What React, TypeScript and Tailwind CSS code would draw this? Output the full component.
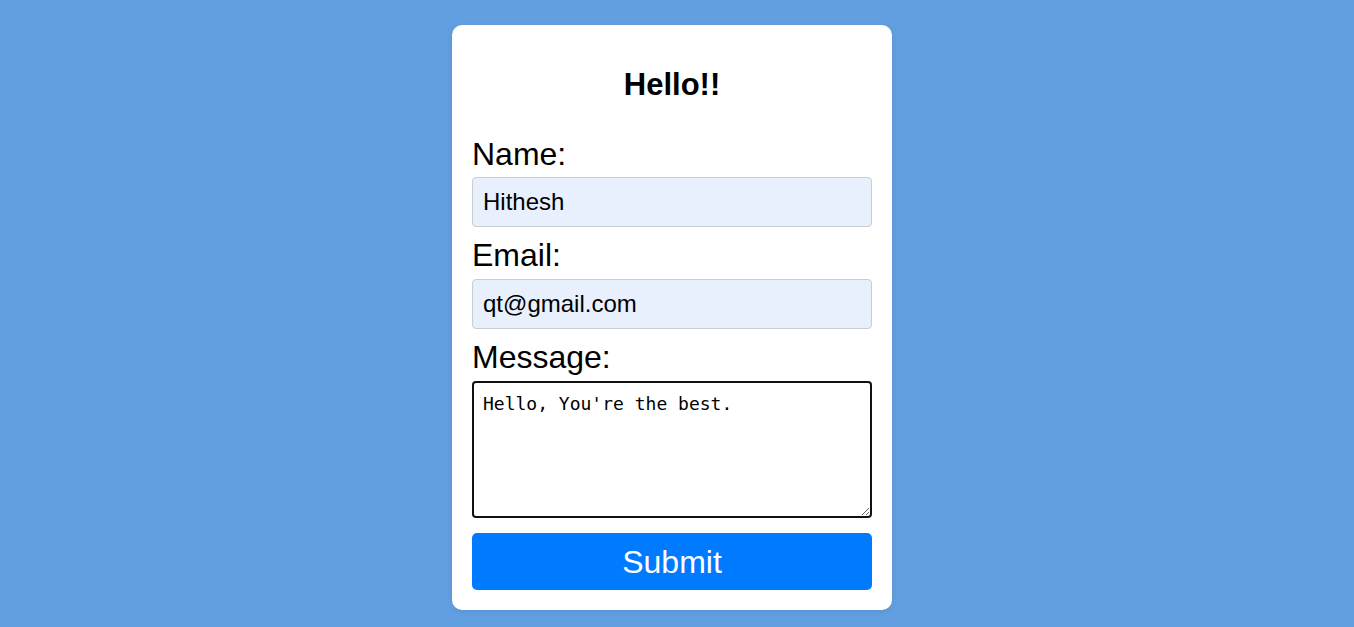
import React, { useState } from 'react';

export default function App() {
  const [name, setName] = useState('Hithesh');
  const [email, setEmail] = useState('qt@gmail.com');
  const [message, setMessage] = useState("Hello, You're the best.");

  return (
    <div className="min-h-screen bg-[#629fe0] flex justify-center pr-[10px]" style={{ fontFamily: '"Liberation Sans", Arial, sans-serif' }}>
      {/* Contact card */}
      <form
        className="mt-[25px] mb-[17px] w-[440px] h-fit bg-white rounded-[10px] p-[20px] flex flex-col shadow-[0_2px_6px_rgba(0,0,0,0.08)]"
        onSubmit={(e) => e.preventDefault()}
      >
        <h1 className="text-[31px] leading-[37px] font-bold text-black text-center mt-[21px] mb-[23px]">Hello!!</h1>

        <label className="text-[32px] leading-[34px] text-black mt-[11px] mb-[6px]">Name:</label>
        <input
          value={name}
          onChange={(e) => setName(e.target.value)}
          className="h-[50px] px-[10px] text-[24px] text-black bg-[#e8f0fe] border border-[#c9ccd1] rounded-[4px] outline-none"
        />

        <label className="text-[32px] leading-[34px] text-black mt-[11px] mb-[7px]">Email:</label>
        <input
          value={email}
          onChange={(e) => setEmail(e.target.value)}
          className="h-[50px] px-[10px] text-[24px] text-black bg-[#e8f0fe] border border-[#c9ccd1] rounded-[4px] outline-none"
        />

        <label className="text-[32px] leading-[34px] text-black mt-[11px] mb-[7px]">Message:</label>
        <textarea
          value={message}
          onChange={(e) => setMessage(e.target.value)}
          className="h-[137px] pt-[10px] px-[9px] text-[18px] leading-[21px] text-black border-2 border-[#111] rounded-[4px] outline-none resize-y"
          style={{ fontFamily: '"DejaVu Sans Mono", monospace' }}
        />

        <button
          type="submit"
          className="mt-[15px] h-[57px] bg-[#007bff] text-white text-[32px] rounded-[5px]"
        >
          Submit
        </button>
      </form>
    </div>
  );
}
